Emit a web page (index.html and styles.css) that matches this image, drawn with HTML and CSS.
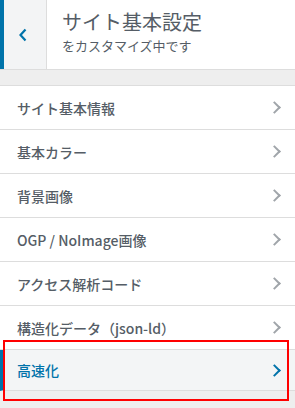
FILE: index.html
```html
<!DOCTYPE html>
<html lang="ja">
<head>
    <meta charset="UTF-8">
    <meta name="viewport" content="width=device-width, initial-scale=1.0">
    <title>サイト基本設定</title>
    <link rel="stylesheet" href="styles.css">
</head>
<body>
    <div class="panel">
        <div class="panel-header">
            <button class="back-button" type="button" aria-label="戻る">
                <svg width="10" height="14" viewBox="0 0 10 14">
                    <polyline points="7.5,1.5 2.5,7 7.5,12.5" fill="none" stroke="#0073aa" stroke-width="2.2"/>
                </svg>
            </button>
            <div class="panel-title">
                <div class="title">サイト基本設定</div>
                <div class="subtitle">をカスタマイズ中です</div>
            </div>
        </div>

        <div class="spacer"></div>

        <ul class="section-list">
            <li class="section-item">サイト基本情報<span class="chevron"></span></li>
            <li class="section-item">基本カラー<span class="chevron"></span></li>
            <li class="section-item">背景画像<span class="chevron"></span></li>
            <li class="section-item">OGP / NoImage画像<span class="chevron"></span></li>
            <li class="section-item">アクセス解析コード<span class="chevron"></span></li>
            <li class="section-item">構造化データ（json-ld）<span class="chevron"></span></li>
            <li class="section-item active">高速化<span class="chevron"></span></li>
        </ul>

        <!-- annotation box around the selected section -->
        <div class="highlight-box"></div>
    </div>
</body>
</html>
```

FILE: styles.css
```css
/* Customizer panel */
body {
    margin: 0;
    padding: 0;
    background-color: #eeeeee;
    font-family: "Noto Sans CJK JP", "Noto Sans", sans-serif;
    color: #555d66;
}

.panel {
    position: relative;
    width: 295px;
    height: 408px;
    overflow: hidden;
}

.panel-header {
    display: flex;
    height: 69px;
    background-color: #ffffff;
    border-bottom: 1px solid #dddddd;
}

.back-button {
    width: 47px;
    padding: 0;
    margin: 0;
    border: none;
    border-left: 4px solid #0073aa;
    border-right: 1px solid #dddddd;
    background-color: #f3f4f5;
    display: flex;
    align-items: center;
    justify-content: center;
    padding-right: 4px;
}

.back-button svg {
    display: block;
}

.panel-title {
    padding: 9px 0 0 15px;
}

.title {
    font-size: 20px;
    line-height: 26px;
    font-weight: 400;
}

.subtitle {
    font-size: 13px;
    line-height: 20px;
    margin-top: 1px;
}

.spacer {
    height: 15px;
    border-bottom: 1px solid #dddddd;
}

.section-list {
    list-style: none;
    margin: 0;
    padding: 0;
    background-color: #ffffff;
}

.section-item {
    display: flex;
    align-items: center;
    justify-content: space-between;
    height: 43px;
    padding: 0 14px 0 17px;
    border-bottom: 1px solid #dddddd;
    font-size: 14px;
    font-weight: 500;
}

.section-item.active {
    height: 40px;
    padding-left: 13px;
    border-left: 4px solid #0073aa;
    background-color: #f3f5f6;
    color: #0073aa;
}

.chevron {
    width: 7px;
    height: 7px;
    border-top: 2px solid #a0a5aa;
    border-right: 2px solid #a0a5aa;
    transform: rotate(45deg);
    margin-right: 2px;
}

.section-item.active .chevron {
    border-color: #0073aa;
}

.highlight-box {
    position: absolute;
    left: 3px;
    top: 340px;
    width: 282px;
    height: 57px;
    border: 2px solid #ff0000;
}
```
